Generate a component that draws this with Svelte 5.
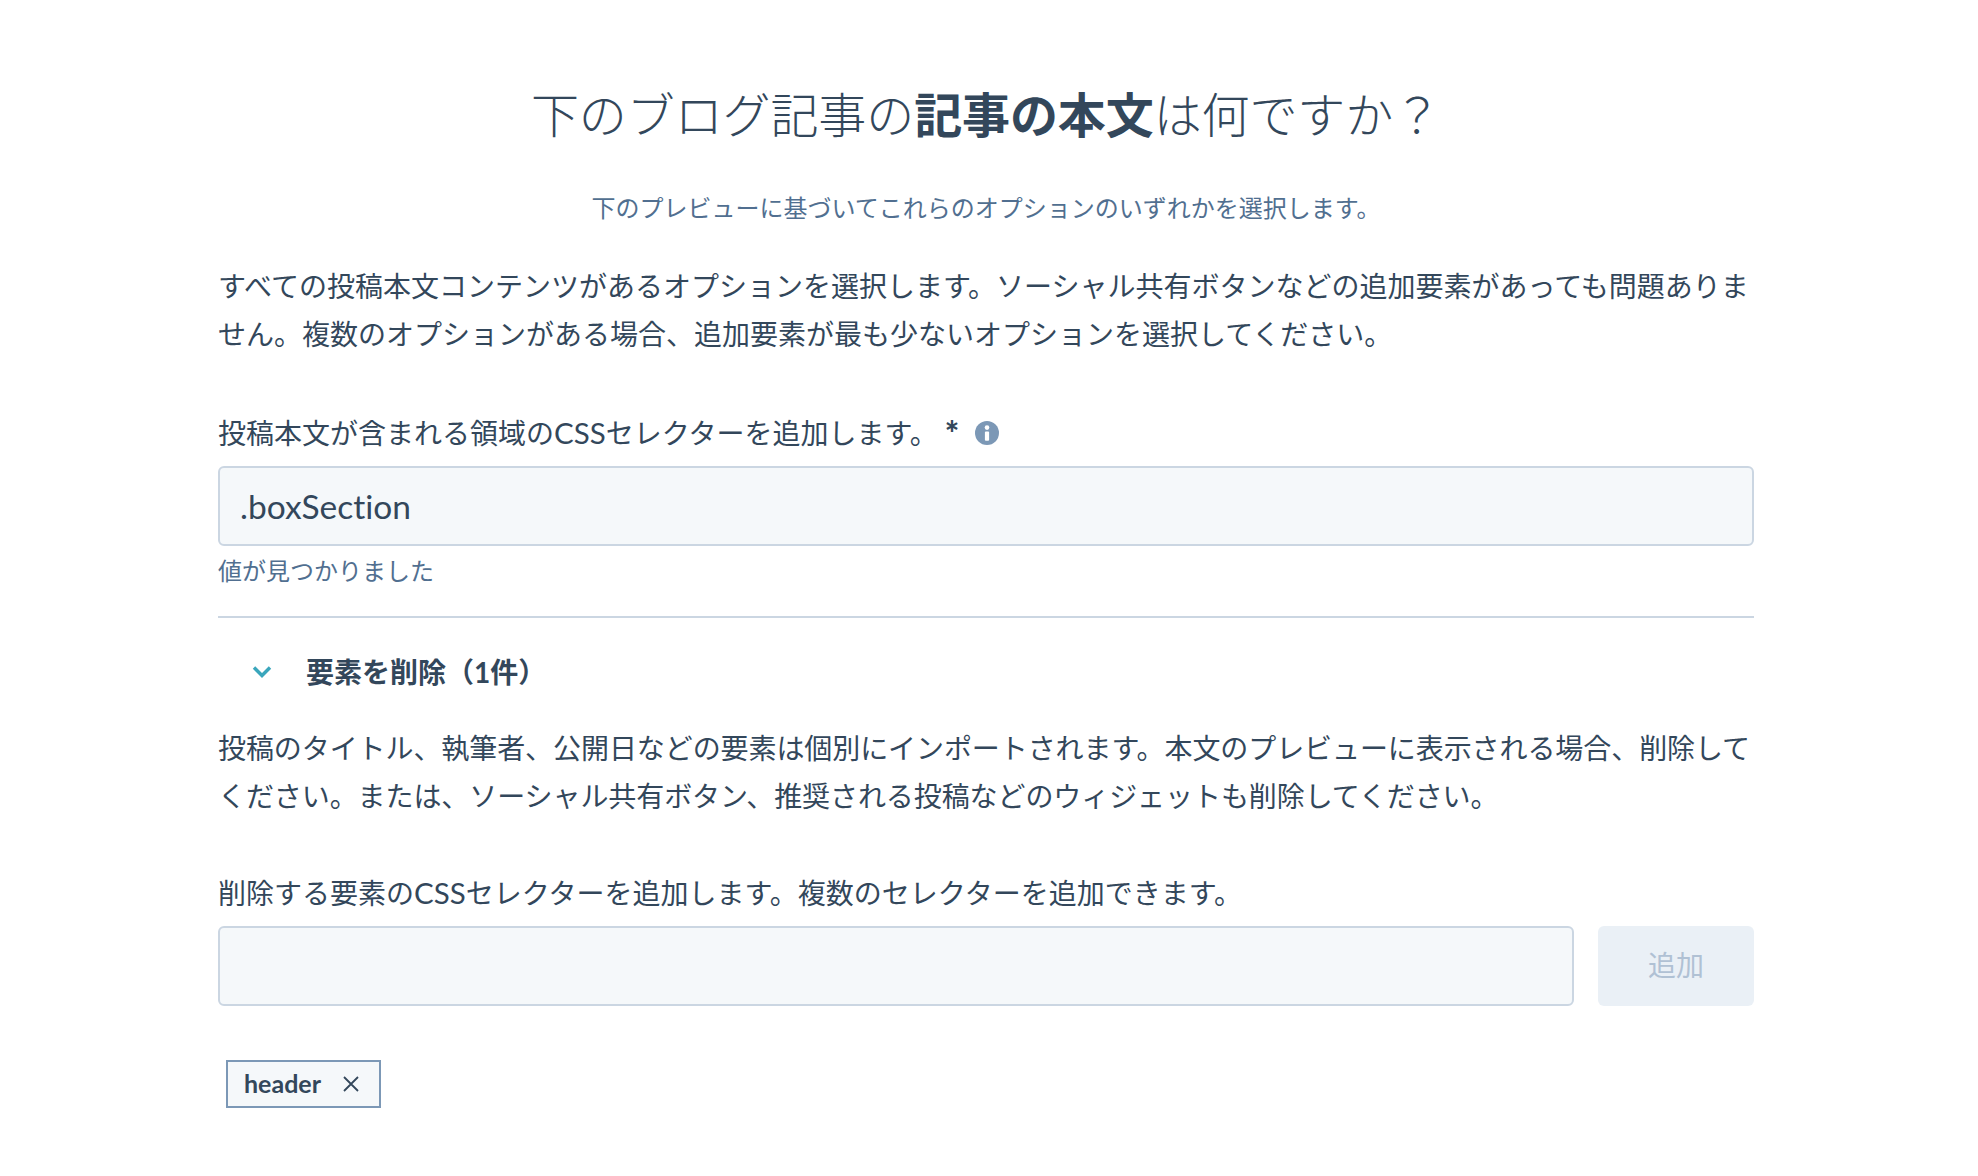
<script lang="ts">
	let selector = $state('.boxSection');
	let removeInput = $state('');
	let removed = $state(['header']);
	let open = $state(true);

	function removeTag(tag: string) {
		removed = removed.filter((t) => t !== tag);
	}

	function addTag() {
		if (removeInput.trim()) {
			removed = [...removed, removeInput.trim()];
			removeInput = '';
		}
	}
</script>

<div class="wizard">
	<h1>下のブログ記事の<strong>記事の本文</strong>は何ですか？</h1>
	<p class="subtitle">下のプレビューに基づいてこれらのオプションのいずれかを選択します。</p>

	<p class="body first">
		すべての投稿本文コンテンツがあるオプションを選択します。ソーシャル共有ボタンなどの追加要素があっても問題ありません。複数のオプションがある場合、追加要素が最も少ないオプションを選択してください。
	</p>

	<div class="label main-label">
		<span>投稿本文が含まれる領域の<span class="latin">CSS</span>セレクターを追加します。</span>
		<span class="required">*</span>
		<svg class="info" viewBox="0 0 24 24" aria-hidden="true">
			<circle cx="12" cy="12" r="12" fill="#7c98b6" />
			<circle cx="12" cy="6.6" r="2.3" fill="#fff" />
			<rect x="9.9" y="10.4" width="4.2" height="9.4" rx="1" fill="#fff" />
		</svg>
	</div>
	<input class="field" type="text" bind:value={selector} />
	<p class="help">値が見つかりました</p>

	<hr />

	<button type="button" class="toggle" onclick={() => (open = !open)}>
		<svg class="chevron" viewBox="0 0 20 14" aria-hidden="true">
			<polyline points="2,2.5 10,10.5 18,2.5" fill="none" stroke="#3aa6bc" stroke-width="3.4" />
		</svg>
		<span>要素を削除（{removed.length}件）</span>
	</button>

	{#if open}
		<p class="body second">
			投稿のタイトル、執筆者、公開日などの要素は個別にインポートされます。本文のプレビューに表示される場合、削除してください。または、ソーシャル共有ボタン、推奨される投稿などのウィジェットも削除してください。
		</p>

		<div class="label remove-label">削除する要素の<span class="latin">CSS</span>セレクターを追加します。複数のセレクターを追加できます。</div>
		<div class="add-row">
			<input class="field" type="text" bind:value={removeInput} />
			<button type="button" class="add" disabled={!removeInput.trim()} onclick={addTag}>追加</button>
		</div>

		<div class="tags">
			{#each removed as tag}
				<span class="tag">
					{tag}
					<button type="button" class="tag-close" aria-label="削除" onclick={() => removeTag(tag)}>
						<svg viewBox="0 0 16 16" aria-hidden="true">
							<path d="M1 1 L15 15 M15 1 L1 15" fill="none" stroke="#33475b" stroke-width="1.8" />
						</svg>
					</button>
				</span>
			{/each}
		</div>
	{/if}
</div>

<style>
	:global(body) {
		background: #fff;
		color: #33475b;
		font-family: Lato, 'Noto Sans CJK JP', sans-serif;
		font-variant-ligatures: none;
	}

	.wizard {
		width: 1536px;
		margin-left: 218px;
		padding: 79px 0 60px;
		font-size: 28px;
	}

	h1 {
		margin: 0;
		font-size: 48px;
		font-weight: 300;
		line-height: 72px;
		letter-spacing: -0.1px;
		text-align: center;
	}

	h1 strong {
		font-weight: 700;
	}

	.subtitle {
		margin: 39px 0 0;
		font-size: 24px;
		line-height: 36px;
		color: #516f90;
		text-align: center;
	}

	.body {
		margin: 0;
		line-height: 48px;
	}

	.first {
		margin-top: 36px;
	}

	.second {
		margin-top: 36px;
		letter-spacing: -0.08px;
	}

	.label {
		line-height: 32px;
	}

	.latin {
		font-size: 29.5px;
	}

	.main-label {
		display: flex;
		align-items: center;
		margin-top: 59px;
	}

	.required {
		margin-left: 7px;
		font-size: 34px;
		font-weight: 900;
	}

	.info {
		width: 24px;
		height: 24px;
		margin-left: 16px;
	}

	.remove-label {
		margin-top: 57px;
	}

	.field {
		display: block;
		box-sizing: border-box;
		width: 100%;
		height: 80px;
		margin-top: 17px;
		padding: 0 20px;
		border: 2px solid #cbd6e2;
		border-radius: 6px;
		background: #f5f8fa;
		color: #33475b;
		font: inherit;
		font-size: 33.5px;
		outline: none;
	}

	.help {
		margin: 7px 0 0;
		font-size: 24px;
		line-height: 36px;
		color: #516f90;
	}

	hr {
		height: 2px;
		margin: 27px 0 0;
		border: 0;
		background: #cbd6e2;
	}

	.toggle {
		display: flex;
		align-items: center;
		margin-top: 38px;
		padding: 0 0 0 34px;
		border: 0;
		background: none;
		color: inherit;
		font: inherit;
		font-weight: 700;
		line-height: 32px;
		cursor: pointer;
	}

	.chevron {
		width: 20px;
		height: 14px;
		margin-right: 34px;
	}

	.add-row {
		display: flex;
		gap: 24px;
		margin-top: 17px;
	}

	.add-row .field {
		flex: 1;
		margin-top: 0;
	}

	.add {
		width: 156px;
		height: 80px;
		padding: 0 0 5px;
		border: 0;
		border-radius: 6px;
		background: #eaf0f6;
		color: #b0c1d4;
		font: inherit;
	}

	.tags {
		display: flex;
		gap: 8px;
		margin: 54px 0 0 8px;
	}

	.tag {
		display: flex;
		align-items: center;
		box-sizing: border-box;
		height: 48px;
		padding: 0 20px 2px 16px;
		border: 2px solid #7c98b6;
		background: #f5f8fa;
		font-size: 25px;
		font-weight: 700;
	}

	.tag-close {
		display: flex;
		margin-left: 22px;
		padding: 2px 0 0;
		border: 0;
		background: none;
		cursor: pointer;
	}

	.tag-close svg {
		width: 16px;
		height: 16px;
	}
</style>
